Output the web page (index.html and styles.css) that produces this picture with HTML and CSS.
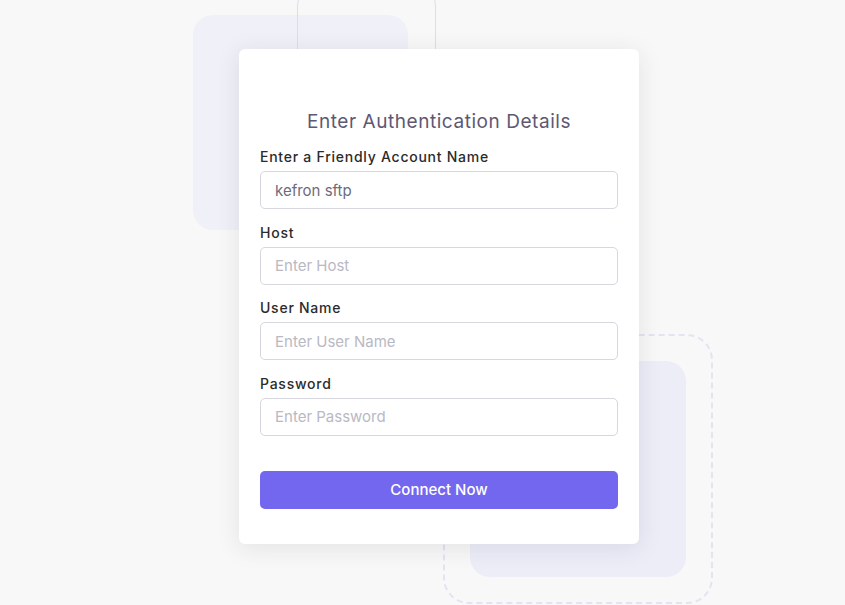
FILE: index.html
```html
<!DOCTYPE html>
<html lang="en">
<head>
    <meta charset="UTF-8">
    <meta name="viewport" content="width=device-width, initial-scale=1.0">
    <title>Enter Authentication Details</title>
    <link rel="stylesheet" href="styles.css">
</head>
<body>
    <div class="stage">
        <div class="deco deco-square"></div>
        <div class="deco deco-outline"></div>
        <div class="deco deco-fill"></div>
        <div class="deco deco-dashed"></div>

        <form class="auth-card">
            <h2 class="auth-title">Enter Authentication Details</h2>

            <label class="field-label" for="account">Enter a Friendly Account Name</label>
            <input class="field-input" id="account" type="text" value="kefron sftp">

            <label class="field-label" for="host">Host</label>
            <input class="field-input" id="host" type="text" placeholder="Enter Host">

            <label class="field-label" for="user">User Name</label>
            <input class="field-input" id="user" type="text" placeholder="Enter User Name">

            <label class="field-label" for="password">Password</label>
            <input class="field-input" id="password" type="password" placeholder="Enter Password">

            <button class="connect-btn" type="button">Connect Now</button>
        </form>
    </div>
</body>
</html>
```

FILE: styles.css
```css
body {
    margin: 0;
    height: 100vh;
    overflow: hidden;
    background: #f8f8f8;
    font-family: Inter, "Open Sans", sans-serif;
}

.stage {
    position: relative;
    height: 100%;
    padding-top: 49px;
    box-sizing: border-box;
}

.deco {
    position: absolute;
    border-radius: 20px;
}

.deco-square {
    left: 193px;
    top: 15px;
    width: 215px;
    height: 215px;
    background: #f0f0f8;
}

.deco-outline {
    left: 297px;
    top: -14px;
    width: 137px;
    height: 200px;
    border: 1px solid #dcdcf0;
}

.deco-fill {
    left: 470px;
    top: 361px;
    width: 216px;
    height: 216px;
    background: #ededf8;
}

.deco-dashed {
    left: 443px;
    top: 334px;
    width: 266px;
    height: 266px;
    border: 2px dashed #e3e3f3;
    border-radius: 26px;
}

.auth-card {
    position: relative;
    width: 400px;
    margin-left: 239px;
    padding: 61px 21px 35px;
    box-sizing: border-box;
    display: flex;
    flex-direction: column;
    background: #fff;
    border-radius: 6px;
    box-shadow: 0 4px 24px rgba(34, 41, 47, 0.1);
}

.auth-title {
    margin: 0 0 13px;
    font-size: 19px;
    line-height: 24px;
    font-weight: 400;
    letter-spacing: 0.55px;
    text-align: center;
    color: #5e5873;
}

.field-label {
    font-size: 14px;
    line-height: 20px;
    font-weight: 500;
    letter-spacing: 0.75px;
    color: #2b2b2b;
    margin-bottom: 4px;
}

.field-input {
    height: 38px;
    margin: 0 0 13.67px;
    padding: 0 14px;
    box-sizing: border-box;
    border: 1px solid #d8d6de;
    border-radius: 5px;
    font-family: inherit;
    font-size: 15px;
    color: #6e6b7b;
    outline: none;
}

.field-input::placeholder {
    color: #b9b9c3;
}

.field-input:last-of-type {
    margin-bottom: 35px;
}

.connect-btn {
    height: 38px;
    border: 0;
    border-radius: 5px;
    background: #7367f0;
    color: #fff;
    font-family: inherit;
    font-size: 15px;
    font-weight: 500;
    cursor: pointer;
}
```
